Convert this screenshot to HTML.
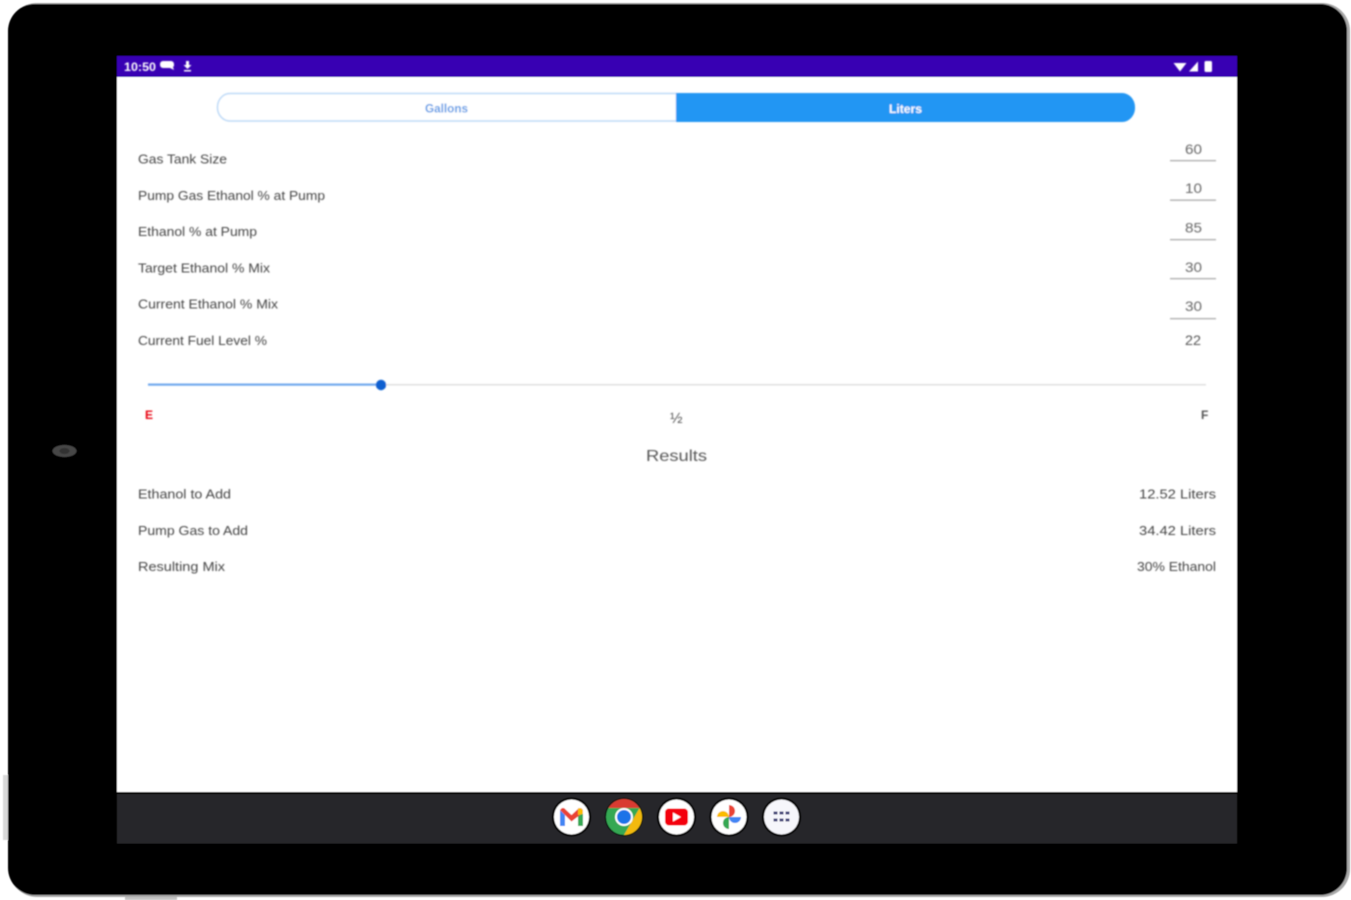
<!DOCTYPE html>
<html>
<head>
<meta charset="utf-8">
<style>
html,body{margin:0;padding:0;width:1351px;height:900px;overflow:hidden;background:#fff}
svg{display:block}
text{font-family:"Liberation Sans",sans-serif}
.t{font-size:13px;fill:#444}
.v{font-size:14px;fill:#666}
</style>
</head>
<body>
<svg width="1351" height="900" viewBox="0 0 1351 900" xmlns="http://www.w3.org/2000/svg">
<defs>
<filter id="b" x="-5%" y="-5%" width="110%" height="110%"><feGaussianBlur stdDeviation="0.75"/></filter>
<filter id="s" x="-2%" y="-2%" width="104%" height="104%"><feGaussianBlur stdDeviation="0.5"/></filter>
</defs>
<rect width="1351" height="900" fill="#fff"/>
<g filter="url(#s)">
<rect x="3" y="775" width="8" height="65" fill="#d8d8d8"/>
<rect x="125" y="890" width="52" height="10" fill="#c4c4c4"/>
<rect x="9" y="3" width="1341" height="894" rx="28" fill="#a8a8a8"/>
<rect x="8" y="4" width="1339" height="891" rx="27" fill="#000"/>
<ellipse cx="64.500" cy="451" rx="12" ry="6" fill="#474747"/>
<ellipse cx="64.500" cy="451" rx="5" ry="3" fill="#303030"/>
<rect x="117" y="56" width="1120" height="736" fill="#fff"/>
<rect x="117" y="56" width="1120" height="21" fill="#3700b3"/>
<rect x="117" y="794" width="1120" height="49.500" fill="#28282b"/>
</g>
<g filter="url(#b)">
<!-- status bar -->
<text x="124" y="71" font-size="12" font-weight="bold" fill="#fff" textLength="32" lengthAdjust="spacingAndGlyphs">10:50</text>
<path d="M163 61h8a3 3 0 0 1 3 3v2l-1 1 1 3-4-2h-7a3 3 0 0 1-3-3v-1a3 3 0 0 1 3-3z" fill="#fff"/>
<path d="M186 61h3v4h2.500l-4 4-4-4h2.500zM184 70h7v1.500h-7z" fill="#fff"/>
<path d="M1173.500 63h13l-6.500 8.500z" fill="#fff"/>
<path d="M1198 61.500v10h-9z" fill="#fff"/>
<rect x="1204.500" y="61" width="7.500" height="11" rx="1.500" fill="#fff"/>

<!-- segmented control -->
<path d="M676.500 93.500H230a12.500 13.500 0 0 0-12.500 13.500 12.500 13.500 0 0 0 12.500 14H676.500z" fill="#fff" stroke="#bcd9f7" stroke-width="1.500"/>
<path d="M676 93H1122a13 14 0 0 1 13 14 13 14 0 0 1-13 15H676z" fill="#2196f3"/>
<text x="425" y="112.500" font-size="12" font-weight="bold" fill="#5a9be6" textLength="43" lengthAdjust="spacingAndGlyphs">Gallons</text>
<text x="889" y="113" font-size="12" font-weight="bold" fill="#fff" textLength="33" lengthAdjust="spacingAndGlyphs">Liters</text>

<!-- inputs -->
<text class="t" x="138" y="163.500" textLength="89" lengthAdjust="spacingAndGlyphs">Gas Tank Size</text>
<text class="t" x="138" y="200" textLength="187" lengthAdjust="spacingAndGlyphs">Pump Gas Ethanol % at Pump</text>
<text class="t" x="138" y="236" textLength="119" lengthAdjust="spacingAndGlyphs">Ethanol % at Pump</text>
<text class="t" x="138" y="272.500" textLength="132" lengthAdjust="spacingAndGlyphs">Target Ethanol % Mix</text>
<text class="t" x="138" y="308.500" textLength="140" lengthAdjust="spacingAndGlyphs">Current Ethanol % Mix</text>
<text class="t" x="138" y="345" textLength="129" lengthAdjust="spacingAndGlyphs">Current Fuel Level %</text>

<text class="v" x="1185" y="154" textLength="17" lengthAdjust="spacingAndGlyphs">60</text>
<text class="v" x="1185" y="193" textLength="17" lengthAdjust="spacingAndGlyphs">10</text>
<text class="v" x="1185" y="232.500" textLength="17" lengthAdjust="spacingAndGlyphs">85</text>
<text class="v" x="1185" y="272" textLength="17" lengthAdjust="spacingAndGlyphs">30</text>
<text class="v" x="1185" y="311" textLength="17" lengthAdjust="spacingAndGlyphs">30</text>
<text class="v" x="1185" y="345" textLength="16" lengthAdjust="spacingAndGlyphs" style="fill:#555">22</text>
<g fill="#aaa">
<rect x="1170" y="160" width="46" height="1.300"/>
<rect x="1170" y="199.500" width="46" height="1.300"/>
<rect x="1170" y="239" width="46" height="1.300"/>
<rect x="1170" y="278" width="46" height="1.300"/>
<rect x="1170" y="318" width="46" height="1.300"/>
</g>

<!-- slider -->
<rect x="148" y="384" width="1058" height="1.500" fill="#dfdfdf"/>
<rect x="148" y="383.500" width="233" height="2.200" fill="#6fa8ee"/>
<circle cx="381" cy="385" r="5.200" fill="#0b5fd0"/>
<text x="145" y="419" font-size="12" font-weight="bold" fill="#e8000b">E</text>
<text x="670" y="423" font-size="15" fill="#555">½</text>
<text x="1201" y="419" font-size="12" font-weight="bold" fill="#555">F</text>

<!-- results -->
<text x="646" y="461" font-size="16" fill="#555" textLength="61" lengthAdjust="spacingAndGlyphs">Results</text>
<text class="t" x="138" y="498.500" textLength="93" lengthAdjust="spacingAndGlyphs">Ethanol to Add</text>
<text class="t" x="138" y="535" textLength="110" lengthAdjust="spacingAndGlyphs">Pump Gas to Add</text>
<text class="t" x="138" y="571" textLength="87" lengthAdjust="spacingAndGlyphs">Resulting Mix</text>
<text class="t" x="1139" y="498.500" textLength="77" lengthAdjust="spacingAndGlyphs">12.52 Liters</text>
<text class="t" x="1139" y="535" textLength="77" lengthAdjust="spacingAndGlyphs">34.42 Liters</text>
<text class="t" x="1137" y="571" textLength="79" lengthAdjust="spacingAndGlyphs">30% Ethanol</text>
</g>

<g filter="url(#s)">
<!-- dock: gmail -->
<circle cx="571.500" cy="817" r="19.500" fill="#000"/>
<circle cx="571.500" cy="817" r="17.500" fill="#fff"/>
<path d="M560 810v16h5v-11z" fill="#4285f4"/>
<path d="M583 810v16h-5v-11z" fill="#34a853"/>
<path d="M560 810l2-2h2l7.500 7 7.500-7h2l2 2-3 5-8.500 6.500L565 815z" fill="#ea4335"/>
<path d="M578 815l0-7h3l2 2v4z" fill="#fbbc04"/>

<!-- chrome -->
<circle cx="624" cy="817" r="19" fill="#000"/>
<circle cx="624" cy="817" r="18" fill="#34a853"/>
<path d="M608.400 808A18 18 0 0 1 639.600 808H624z" fill="#d93b30"/>
<path d="M639.600 808A18 18 0 0 1 624 835L632 821z" fill="#f3b90d"/>
<circle cx="624" cy="817" r="9" fill="#fff"/>
<circle cx="624" cy="817" r="7" fill="#1a73e8"/>

<!-- youtube -->
<circle cx="676.500" cy="817" r="19.500" fill="#000"/>
<circle cx="676.500" cy="817" r="17.500" fill="#fff"/>
<rect x="665" y="808.500" width="23" height="17" rx="4" fill="#f40009"/>
<path d="M673 812.500l8 4.500-8 4.500z" fill="#fff"/>

<!-- photos -->
<circle cx="729" cy="817" r="19.500" fill="#000"/>
<circle cx="729" cy="817" r="17.500" fill="#fff"/>
<path d="M729 817v-12a6 6 0 0 1 0 12z" fill="#ea4335"/>
<path d="M729 817h12a6 6 0 0 1-12 0z" fill="#4285f4"/>
<path d="M729 817v12a6 6 0 0 1 0-12z" fill="#34a853"/>
<path d="M729 817h-12a6 6 0 0 1 12 0z" fill="#fbbc04"/>

<!-- apps -->
<circle cx="781.500" cy="817" r="19.500" fill="#000"/>
<circle cx="781.500" cy="817" r="17.500" fill="#f6f6fb"/>
<g fill="#44477a">
<rect x="773.500" y="811.500" width="4" height="3"/><rect x="779.500" y="811.500" width="4" height="3"/><rect x="785.500" y="811.500" width="4" height="3"/>
<rect x="773.500" y="818.500" width="4" height="3"/><rect x="779.500" y="818.500" width="4" height="3"/><rect x="785.500" y="818.500" width="4" height="3"/>
</g>
</g>
</svg>
</body>
</html>
